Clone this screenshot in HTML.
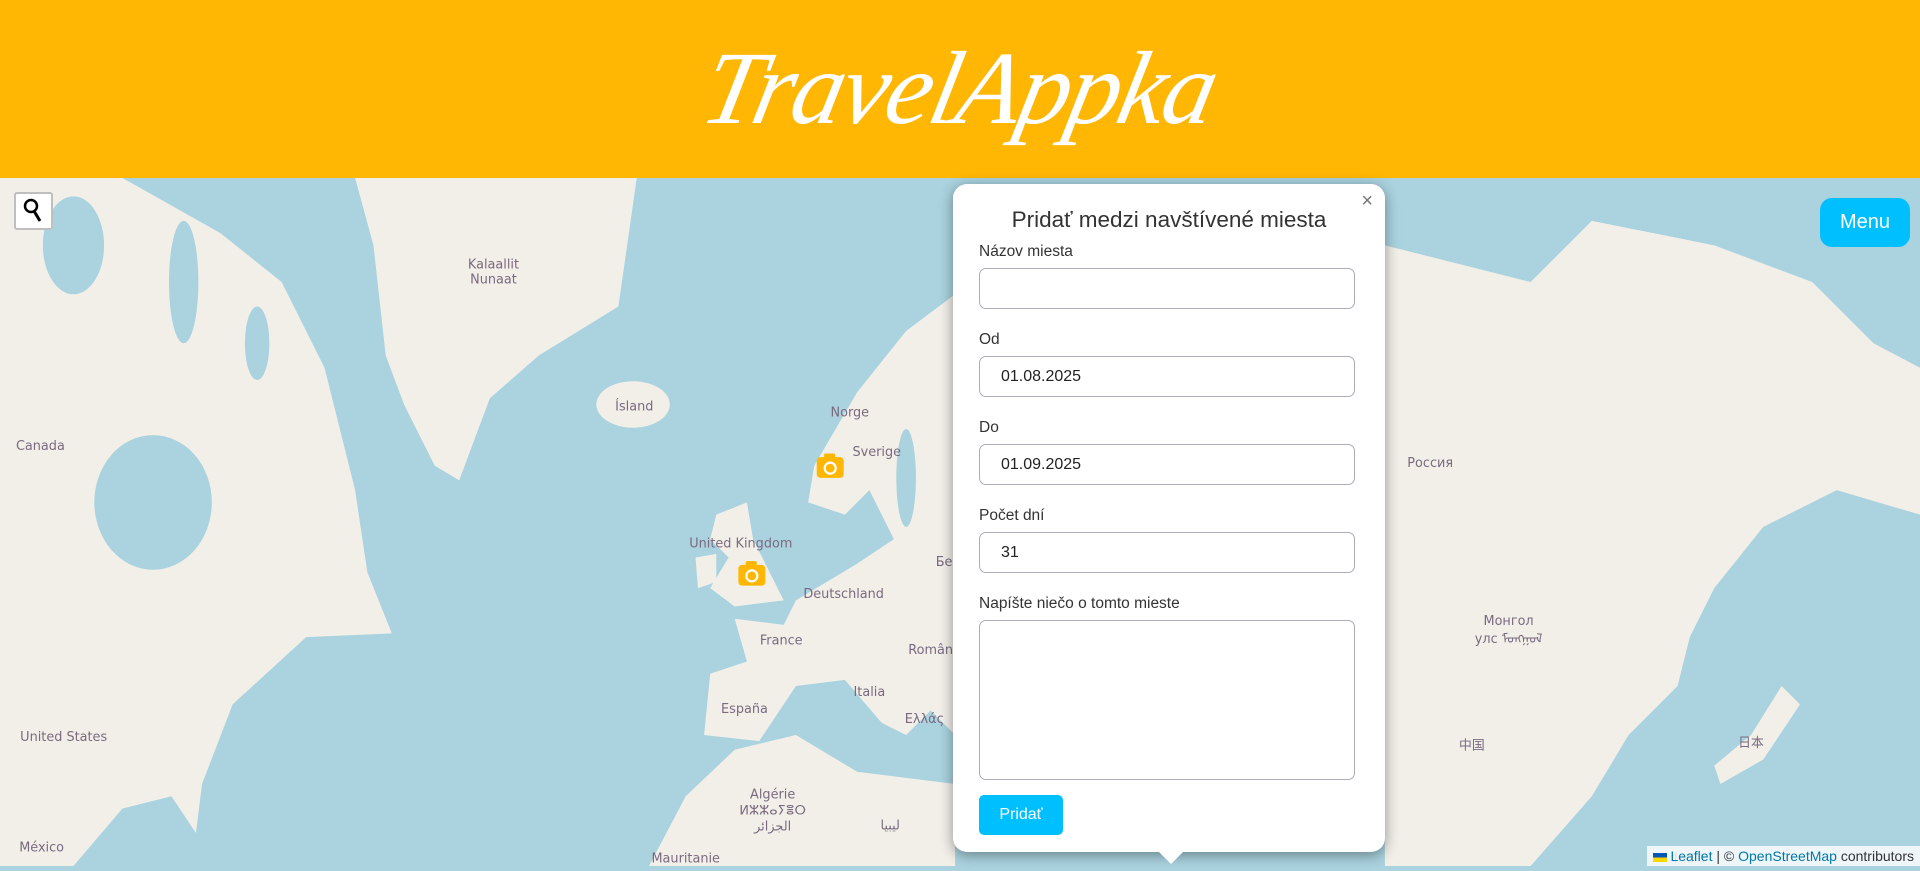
<!DOCTYPE html>
<html><head><meta charset="utf-8"><style>
*{box-sizing:border-box;margin:0;padding:0}
body{width:1920px;height:866px;overflow:hidden;font-family:"Liberation Sans",Arial,sans-serif;background:#aad3df;position:relative}
#hdr{position:absolute;left:0;top:0;width:1920px;height:178px;background:#ffb703;text-align:center}
#hdr h1{font-family:"Liberation Serif",serif;font-style:italic;font-weight:normal;color:#fff;font-size:104px;line-height:178px;letter-spacing:-2px;transform:skewX(-12deg)}
#map{position:absolute;left:0;top:178px;width:1920px;height:688px}
.lbl{font-family:"DejaVu Sans",sans-serif;font-size:10.5px;fill:#7a6a80;text-anchor:middle}
#srch{position:absolute;left:14px;top:192px;width:39px;height:38px;background:#fff;border:2px solid rgba(0,0,0,.25);border-radius:3px}
#menu{position:absolute;left:1820px;top:198px;width:90px;height:49px;background:#00bfff;color:#fff;border-radius:12px;font-size:20px;text-align:center;line-height:49px}
#pop{position:absolute;left:953px;top:184px;width:432px;height:668px;background:#fff;border-radius:14px;box-shadow:0 3px 14px rgba(0,0,0,.4)}
#pop .x{position:absolute;right:12px;top:6px;font-size:20px;color:#777}
#pop h2{font-weight:normal;font-size:22.5px;color:#333;text-align:center;margin-top:23px;height:28px}
.f{position:absolute;left:26px;width:376px}
.lab{font-size:15.5px;color:#333}
.in{position:absolute;left:26px;width:376px;height:41px;border:1px solid #a9adbd;border-radius:7px;font-size:16px;color:#222;padding:11px 0 0 21px}
#btn{position:absolute;left:26px;top:611px;width:84px;height:40px;background:#00bfff;color:#fff;border-radius:5px;font-size:16px;text-align:center;line-height:40px}
#tip{position:absolute;left:1157px;top:850px;width:0;height:0;border-left:14px solid transparent;border-right:14px solid transparent;border-top:14px solid #fff}
#attr{position:absolute;right:0;bottom:0;height:20px;background:rgba(255,255,255,.8);font-size:14px;color:#333;padding:2px 6px 0 6px}
#attr a{color:#0078a8;text-decoration:none}
</style></head><body>
<div id="hdr"><h1>TravelAppka</h1></div>
<div id="map">
<svg width="1920" height="688" viewBox="0 145 1568 562" preserveAspectRatio="none">
<rect x="0" y="145" width="1568" height="562" fill="#aad3df"/>
<g fill="#f2efe9">
<polygon points="0,145 100,145 180,190 230,230 265,300 290,400 300,467 320,517 250,520 190,575 165,640 160,680 140,650 100,660 60,707 0,707"/>
<polygon points="290,145 520,145 505,250 440,290 400,325 375,392 355,380 330,330 315,290 305,200"/>
<ellipse cx="517" cy="330" rx="30" ry="19"/>
<polygon points="585,420 610,410 615,440 630,470 640,490 600,495 580,480 595,455 580,440"/>
<polygon points="568,455 585,452 585,475 570,480"/>
<polygon points="780,240 740,270 700,320 665,380 660,410 690,420 710,400 730,440 700,460 650,490 640,510 600,505 610,540 580,550 575,600 620,605 650,560 690,555 720,590 740,600 760,580 780,600"/>
<polygon points="530,707 560,650 600,612 650,600 700,630 780,640 780,707"/>
<polygon points="1131,200 1250,230 1300,180 1400,200 1480,230 1530,280 1568,300 1568,420 1500,400 1440,430 1400,480 1380,520 1370,560 1330,600 1300,650 1250,707 1131,707"/>
<polygon points="1455,560 1470,575 1440,620 1405,640 1400,625 1430,600"/>
</g>
<g fill="#aad3df">
<ellipse cx="125" cy="410" rx="48" ry="55"/>
<ellipse cx="60" cy="200" rx="25" ry="40"/>
<ellipse cx="150" cy="230" rx="12" ry="50"/>
<ellipse cx="210" cy="280" rx="10" ry="30"/>
<ellipse cx="740" cy="390" rx="8" ry="40"/>
</g>
<text class="lbl" x="403" y="219">Kalaallit</text><text class="lbl" x="403" y="231">Nunaat</text>
<text class="lbl" x="518" y="335">Ísland</text>
<text class="lbl" x="33" y="367">Canada</text>
<text class="lbl" x="694" y="340">Norge</text>
<text class="lbl" x="716" y="372">Sverige</text>
<text class="lbl" x="605" y="447">United Kingdom</text>
<text class="lbl" x="689" y="488">Deutschland</text>
<text class="lbl" x="638" y="526">France</text>
<text class="lbl" x="608" y="582">España</text>
<text class="lbl" x="710" y="568">Italia</text>
<text class="lbl" x="755" y="590">Ελλάς</text>
<text class="lbl" x="52" y="605">United States</text>
<text class="lbl" x="631" y="652">Algérie</text>
<text class="lbl" x="631" y="665">ⵍⵣⵣⴰⵢⴻⵔ</text>
<text class="lbl" x="631" y="678">الجزائر</text>
<text class="lbl" x="727" y="677">ليبيا</text>
<text class="lbl" x="560" y="704">Mauritanie</text>
<text class="lbl" x="34" y="695">México</text>
<text class="lbl" x="1168" y="381">Россия</text>
<text class="lbl" x="1232" y="510">Монгол</text>
<text class="lbl" x="1232" y="525">улс ᠮᠣᠩᠭᠣᠯ</text>
<text class="lbl" x="1202" y="612">中国</text>
<text class="lbl" x="1430" y="610">日本</text>
<text class="lbl" x="1380" y="704">India</text>
<text class="lbl" x="771" y="462">Бе</text>
<text class="lbl" x="760" y="534">Român</text>
<g fill="#ffb703">
<rect x="667" y="373" width="22" height="17" rx="3"/><rect x="673" y="370" width="9" height="5" rx="1"/>
<rect x="603" y="461" width="22" height="17" rx="3"/><rect x="609" y="458" width="9" height="5" rx="1"/>
</g>
<g fill="none" stroke="#fff" stroke-width="1.8"><circle cx="678" cy="382" r="4.5"/><circle cx="614" cy="470" r="4.5"/></g>
</svg>
</div>
<div id="srch"><svg width="35" height="34" viewBox="0 0 35 34"><circle cx="15" cy="12" r="6" fill="none" stroke="#000" stroke-width="2.5"/><line x1="18" y1="17" x2="24" y2="27" stroke="#000" stroke-width="3"/></svg></div>
<div id="menu">Menu</div>
<div id="pop">
<div class="x">×</div>
<h2>Pridať medzi navštívené miesta</h2>
<div class="f lab" style="top:59px">Názov miesta</div>
<div class="in" style="top:84px"></div>
<div class="f lab" style="top:147px">Od</div>
<div class="in" style="top:172px">01.08.2025</div>
<div class="f lab" style="top:235px">Do</div>
<div class="in" style="top:260px">01.09.2025</div>
<div class="f lab" style="top:323px">Počet dní</div>
<div class="in" style="top:348px">31</div>
<div class="f lab" style="top:411px">Napíšte niečo o tomto mieste</div>
<div class="in" style="top:436px;height:160px"></div>
<div id="btn">Pridať</div>
</div>
<div id="tip"></div>
<div id="attr"><span style="display:inline-block;width:14px;height:9px;background:linear-gradient(#0057b7 50%,#ffd700 50%);vertical-align:middle"></span> <a>Leaflet</a> | © <a>OpenStreetMap</a> contributors</div>
</body></html>
